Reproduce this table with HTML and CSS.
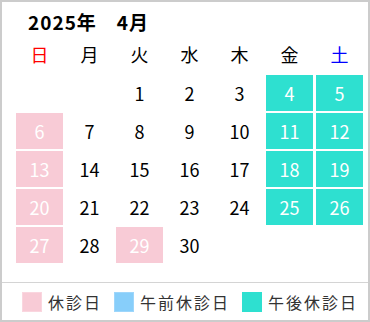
FILE: index.html
```html
<!DOCTYPE html>
<html lang="ja">
<head>
<meta charset="utf-8">
<link rel="stylesheet" href="styles.css">
</head>
<body>
<div class="cal">
  <div class="title">2025年　4月</div>
  <div class="grid week">
    <div class="wd sun">日</div>
    <div class="wd">月</div>
    <div class="wd">火</div>
    <div class="wd">水</div>
    <div class="wd">木</div>
    <div class="wd">金</div>
    <div class="wd sat">土</div>
  </div>
  <div class="grid days">
    <div class="d"></div>
    <div class="d"></div>
    <div class="d">1</div>
    <div class="d">2</div>
    <div class="d">3</div>
    <div class="d pm">4</div>
    <div class="d pm">5</div>

    <div class="d off">6</div>
    <div class="d">7</div>
    <div class="d">8</div>
    <div class="d">9</div>
    <div class="d">10</div>
    <div class="d pm">11</div>
    <div class="d pm">12</div>

    <div class="d off">13</div>
    <div class="d">14</div>
    <div class="d">15</div>
    <div class="d">16</div>
    <div class="d">17</div>
    <div class="d pm">18</div>
    <div class="d pm">19</div>

    <div class="d off">20</div>
    <div class="d">21</div>
    <div class="d">22</div>
    <div class="d">23</div>
    <div class="d">24</div>
    <div class="d pm">25</div>
    <div class="d pm">26</div>

    <div class="d off">27</div>
    <div class="d">28</div>
    <div class="d off">29</div>
    <div class="d">30</div>
    <div class="d"></div>
    <div class="d"></div>
    <div class="d"></div>
  </div>
  <div class="legend">
    <div class="item"><span class="sw sw-off"></span><span class="lt">休診日</span></div>
    <div class="item"><span class="sw sw-am"></span><span class="lt">午前休診日</span></div>
    <div class="item"><span class="sw sw-pm"></span><span class="lt">午後休診日</span></div>
  </div>
</div>
</body>
</html>
```
FILE: styles.css
```css
html, body {
  margin: 0;
  padding: 0;
  background: #fff;
}
.cal {
  box-sizing: border-box;
  width: 370px;
  height: 322px;
  border: 2px solid #cccccc;
  font-family: "Noto Sans CJK JP", "Noto Sans", sans-serif;
  color: #000;
  display: flex;
  flex-direction: column;
}
.title {
  font-size: 19px;
  font-weight: 700;
  letter-spacing: 1px;
  line-height: 24px;
  height: 24px;
  padding: 8px 0 0 26px;
}
.grid {
  display: grid;
  grid-template-columns: repeat(7, 47px);
  column-gap: 3px;
  row-gap: 2px;
  padding-left: 14px;
}
.week {
  margin-top: 2px;
  height: 37px;
}
.wd {
  font-size: 18px;
  line-height: 37px;
  text-align: center;
}
.sun { color: #ff0000; }
.sat { color: #0000ff; }
.days {
  grid-auto-rows: 36px;
  margin-top: 2px;
}
.d {
  font-size: 18px;
  line-height: 36px;
  text-align: center;
}
.off {
  background: #f8cbd6;
  color: #fff;
}
.pm {
  background: #2ee0d0;
  color: #fff;
}
.legend {
  margin-top: auto;
  border-top: 1px solid #d4d4d4;
  height: 37px;
  display: flex;
  align-items: center;
  padding-left: 20px;
  white-space: nowrap;
}
.item {
  display: flex;
  align-items: center;
  flex-shrink: 0;
  margin-right: 12px;
}
.sw {
  flex-shrink: 0;
  width: 20px;
  height: 20px;
  margin-right: 6px;
  box-sizing: border-box;
}
.sw-off { background: #f8cbd6; border: 1px solid #fad6df; }
.sw-am { background: #87cefa; border: 1px solid #9ed6fb; }
.sw-pm { background: #2ee0d0; }
.lt {
  font-size: 16px;
  letter-spacing: 2px;
  color: #333;
  line-height: 20px;
  white-space: nowrap;
}
.item:last-child { margin-right: 0; }
```
